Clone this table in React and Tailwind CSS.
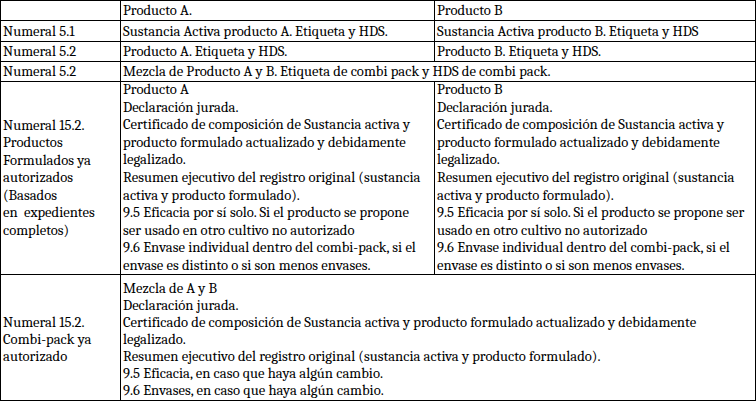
function Lines({ lines }) {
  return lines.map((l, i) => (
    <div key={i} className="whitespace-pre">{l}</div>
  ));
}

export default function App() {
  const base = "border-r border-b border-black pl-[2px] pr-[1px] overflow-hidden";
  const one = base + " flex items-center leading-[17px]";
  const prodA = [
    "Producto A",
    "Declaración jurada.",
    "Certificado de composición de Sustancia activa y",
    "producto formulado actualizado y debidamente",
    "legalizado.",
    "Resumen ejecutivo del registro original (sustancia",
    "activa y producto formulado).",
    "9.5 Eficacia por sí solo. Si el producto se propone",
    "ser usado en otro cultivo no autorizado",
    "9.6 Envase individual dentro del combi-pack, si el",
    "envase es distinto o si son menos envases.",
  ];
  const prodB = [
    "Producto B",
    "Declaración jurada.",
    "Certificado de composición de Sustancia activa y",
    "producto formulado actualizado y debidamente",
    "legalizado.",
    "Resumen ejecutivo del registro original (sustancia",
    "activa y producto formulado).",
    "9.5 Eficacia por sí solo. Si el producto se propone ser",
    "usado en otro cultivo no autorizado",
    "9.6 Envase individual dentro del combi-pack, si el",
    "envase es distinto o si son menos envases.",
  ];
  const mezcla = [
    "Mezcla de A y B",
    "Declaración jurada.",
    "Certificado de composición de Sustancia activa y producto formulado actualizado y debidamente",
    "legalizado.",
    "Resumen ejecutivo del registro original (sustancia activa y producto formulado).",
    "9.5 Eficacia, en caso que haya algún cambio.",
    "9.6 Envases, en caso que haya algún cambio.",
  ];
  return (
    <div className="w-[756px] h-[402px] bg-white text-black font-serif [font-family:Liberation_Serif,Times_New_Roman,serif] text-[14.67px]">
      <div className="grid grid-cols-[120px_314px_321px] grid-rows-[20px_21px_20px_20px_193px_126px] border-l border-t border-black w-[756px]">
        <div className={one}></div>
        <div className={one}>Producto A.</div>
        <div className={one}>Producto B</div>

        <div className={one}>Numeral 5.1</div>
        <div className={one}>Sustancia Activa producto A. Etiqueta y HDS.</div>
        <div className={one}>Sustancia Activa producto B. Etiqueta y HDS</div>

        <div className={one}>Numeral 5.2</div>
        <div className={one}>Producto A. Etiqueta y HDS.</div>
        <div className={one}>Producto B. Etiqueta y HDS.</div>

        <div className={one}>Numeral 5.2</div>
        <div className={one + " col-span-2"}>Mezcla de Producto A y B. Etiqueta de combi pack y HDS de combi pack.</div>

        <div className={base + " flex flex-col justify-center leading-[17.5px]"}>
          <Lines lines={["Numeral 15.2.", "Productos", "Formulados ya", "autorizados", "(Basados", "en  expedientes", "completos)"]} />
        </div>
        <div className={base + " flex flex-col justify-start leading-[17.6px] -mt-[0px]"}>
          <div className="-mt-[1px]"><Lines lines={prodA} /></div>
        </div>
        <div className={base + " flex flex-col justify-start leading-[17.6px]"}>
          <div className="-mt-[1px]"><Lines lines={prodB} /></div>
        </div>

        <div className={base + " flex flex-col justify-center leading-[17px] pt-[4px]"}>
          <Lines lines={["Numeral 15.2.", "Combi-pack ya", "autorizado"]} />
        </div>
        <div className={base + " col-span-2 flex flex-col justify-center leading-[17px] pt-[4px]"}>
          <Lines lines={mezcla} />
        </div>
      </div>
    </div>
  );
}
